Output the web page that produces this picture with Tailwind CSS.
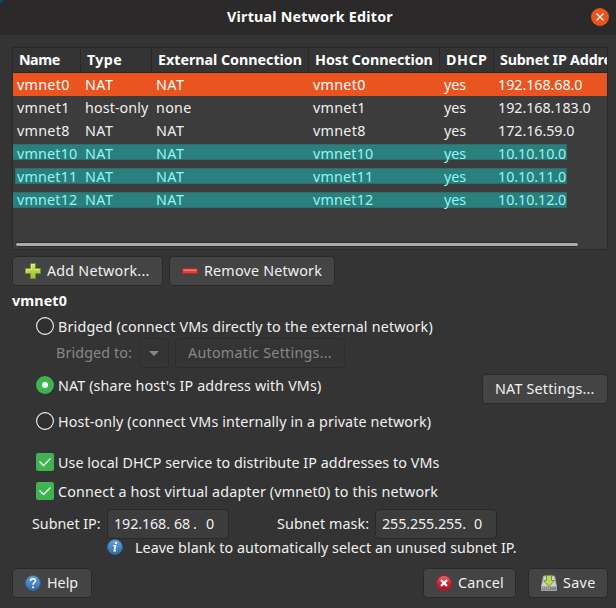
<!DOCTYPE html>
<html lang="en">
<head>
<meta charset="utf-8">
<title>Virtual Network Editor</title>
<script src="https://cdn.jsdelivr.net/npm/@tailwindcss/browser@4"></script>
</head>
<body class="bg-[#0b4a66]">
<main class="flex h-[608px] w-[616px] flex-col overflow-hidden rounded-tl-[6px] bg-[#343434] font-['Noto_Sans',sans-serif] text-[14.3px] leading-[20px] text-[#f0f0f0]">

  <!-- Title bar -->
  <header class="relative flex h-[35px] shrink-0 items-center justify-center bg-[#2b2929] pb-[2px] pl-[4px] text-white">
    <h1 class="font-bold tracking-[0.2px]">Virtual Network Editor</h1>
    <svg class="absolute top-[8px] right-[7px] size-[18px]" viewBox="0 0 18 18"><circle cx="9" cy="9" r="9" fill="#e95420"/><path d="M5.500 5.500l7 7M12.500 5.500l-7 7" stroke="#fff" stroke-width="1.200"/></svg>
  </header>

  <!-- Network table -->
  <section class="mt-[12px] ml-[12px] flex h-[203px] w-[596px] shrink-0 flex-col overflow-hidden border border-[#292929] bg-[#3c3c3c] whitespace-nowrap">
    <div class="grid h-[25px] shrink-0 grid-cols-[68px_71px_157px_131px_54px_113px] border-b border-[#272727] bg-[#343434] font-bold leading-[24px] text-white">
      <div class="border-r border-[#2a2a2a] pl-[6px] tracking-[-0.5px]">Name</div>
      <div class="border-r border-[#2a2a2a] pl-[6px] tracking-[0.35px]">Type</div>
      <div class="border-r border-[#2a2a2a] pl-[6px] tracking-[-0.03px]">External Connection</div>
      <div class="border-r border-[#2a2a2a] pl-[6px] tracking-[-0.03px]">Host Connection</div>
      <div class="border-r border-[#2a2a2a] pl-[6px] tracking-[0.5px]">DHCP</div>
      <div class="overflow-hidden pl-[6px] tracking-[-0.2px]">Subnet IP Address</div>
    </div>
    <div class="grid h-[23px] shrink-0 grid-cols-[68px_71px_157px_131px_54px_113px] bg-[#e95420] pl-[4px] leading-[23px] text-white">
      <div class="tracking-[0.3px]">vmnet0</div><div class="tracking-[0.5px]">NAT</div><div class="tracking-[0.5px]">NAT</div><div class="tracking-[0.3px]">vmnet0</div><div>yes</div><div class="tracking-[-0.05px]">192.168.68.0</div>
    </div>
    <div class="grid h-[23px] shrink-0 grid-cols-[68px_71px_157px_131px_54px_113px] pl-[4px] leading-[23px]">
      <div class="tracking-[0.3px]">vmnet1</div><div class="tracking-[0.1px]">host-only</div><div class="tracking-[0.3px]">none</div><div class="tracking-[0.3px]">vmnet1</div><div>yes</div><div class="tracking-[-0.05px]">192.168.183.0</div>
    </div>
    <div class="grid h-[23px] shrink-0 grid-cols-[68px_71px_157px_131px_54px_113px] pl-[4px] leading-[23px]">
      <div class="tracking-[0.3px]">vmnet8</div><div class="tracking-[0.5px]">NAT</div><div class="tracking-[0.5px]">NAT</div><div class="tracking-[0.3px]">vmnet8</div><div>yes</div><div class="tracking-[-0.05px]">172.16.59.0</div>
    </div>
    <div class="relative isolate grid h-[23px] shrink-0 grid-cols-[68px_71px_157px_131px_54px_113px] pl-[4px] leading-[23px] text-[#93f6f2]">
      <span class="absolute top-[2px] left-0 -z-10 h-[16px] w-[554px] border-y border-r border-[#2e6e6b] bg-[#29807e]"></span>
      <div class="tracking-[0.2px]">vmnet10</div><div class="tracking-[0.5px]">NAT</div><div class="tracking-[0.5px]">NAT</div><div class="tracking-[0.2px]">vmnet10</div><div>yes</div><div class="tracking-[-0.05px]">10.10.10.0</div>
    </div>
    <div class="relative isolate grid h-[23px] shrink-0 grid-cols-[68px_71px_157px_131px_54px_113px] pl-[4px] leading-[23px] text-[#93f6f2]">
      <span class="absolute top-[3px] left-[2px] -z-10 h-[16px] w-[552px] border border-[#2e6e6b] bg-[#29807e]"></span>
      <div class="tracking-[0.2px]">vmnet11</div><div class="tracking-[0.5px]">NAT</div><div class="tracking-[0.5px]">NAT</div><div class="tracking-[0.2px]">vmnet11</div><div>yes</div><div class="tracking-[-0.05px]">10.10.11.0</div>
    </div>
    <div class="relative isolate grid h-[23px] shrink-0 grid-cols-[68px_71px_157px_131px_54px_113px] pl-[4px] leading-[23px] text-[#93f6f2]">
      <span class="absolute top-[4px] left-0 -z-10 h-[16px] w-[554px] border-y border-r border-[#2e6e6b] bg-[#29807e]"></span>
      <div class="tracking-[0.2px]">vmnet12</div><div class="tracking-[0.5px]">NAT</div><div class="tracking-[0.5px]">NAT</div><div class="tracking-[0.2px]">vmnet12</div><div>yes</div><div class="tracking-[-0.05px]">10.10.12.0</div>
    </div>
    <div class="mt-auto mb-[2px] ml-[2px] h-[5px] w-[564px] shrink-0 rounded-[3px] border border-[#2c2c2c] bg-[#aaaaaa]"></div>
  </section>

  <!-- Table actions -->
  <div class="mt-[6px] ml-[12px] flex h-[30px] shrink-0 gap-[6px]">
    <button class="flex h-[30px] w-[151px] items-center rounded-[4px] border border-[#2a2a2a] bg-[#444444] pl-[12px] whitespace-nowrap">
      <svg class="mr-[6px] size-[16px] shrink-0" viewBox="0 0 16 16"><defs><linearGradient id="gp" x1="0" y1="0" x2="0" y2="1"><stop offset="0" stop-color="#cfe86a"/><stop offset="1" stop-color="#9fbf2a"/></linearGradient></defs><path d="M5.500.5h5v5h5v5h-5v5h-5v-5h-5v-5h5z" fill="url(#gp)" stroke="#6f9130"/><path d="M6.500 6V1.500h3M1.500 9.500v-3h5M9.500 6.500h5" fill="none" stroke="#e3f29a" stroke-opacity=".8"/></svg>
      <span class="tracking-[0.22px]">Add Network...</span>
    </button>
    <button class="flex h-[30px] w-[166px] items-center rounded-[4px] border border-[#2a2a2a] bg-[#444444] pl-[12px] whitespace-nowrap">
      <svg class="mr-[6px] size-[16px] shrink-0" viewBox="0 0 16 16"><path d="M.5 5.500h15v5H.5z" fill="#d84040" stroke="#b02a2a"/><path d="M1.500 6.500h13v1.500h-13z" fill="#ec7b78"/></svg>
      <span class="tracking-[0.2px]">Remove Network</span>
    </button>
  </div>

  <h2 class="mt-[5px] ml-[12px] h-[20px] shrink-0 font-bold tracking-[0.1px] text-white">vmnet0</h2>

  <!-- Connection mode -->
  <label class="mt-[5px] ml-[36px] flex h-[20px] shrink-0 items-center gap-[4px] whitespace-nowrap">
    <svg class="size-[18px] shrink-0" viewBox="0 0 18 18"><circle cx="9" cy="9" r="8.400" fill="#303030" stroke="#f2f2f2" stroke-width="1.100"/></svg>
    <span class="pt-[2px] tracking-[0.18px]">Bridged (connect VMs directly to the external network)</span>
  </label>
  <div class="mt-[2px] ml-[56px] flex h-[30px] shrink-0 items-center whitespace-nowrap text-[#878787]">
    <span class="w-[83px] tracking-[0.12px]">Bridged to:</span>
    <span class="flex h-[30px] w-[30px] items-center justify-center rounded-[4px] border border-[#2d2d2d]"><svg class="h-[5px] w-[10px]" viewBox="0 0 10 5"><path d="M0 0h10L5 5z" fill="#878787"/></svg></span>
    <span class="ml-[6px] flex h-[30px] w-[170px] items-center rounded-[4px] border border-[#2d2d2d] pl-[12px] tracking-[0.26px]">Automatic Settings...</span>
  </div>
  <div class="mt-[6px] mr-[8px] ml-[36px] flex h-[30px] shrink-0 items-start justify-between whitespace-nowrap">
    <label class="mt-[1px] flex h-[20px] items-center gap-[4px]">
      <svg class="size-[18px] shrink-0" viewBox="0 0 18 18"><circle cx="9" cy="9" r="9" fill="#3eb34f"/><circle cx="9" cy="9" r="3" fill="#fff"/></svg>
      <span class="pt-[2px] tracking-[0.13px]">NAT (share host's IP address with VMs)</span>
    </label>
    <button class="flex h-[30px] w-[126px] items-center rounded-[4px] border border-[#2a2a2a] bg-[#444444] pl-[12px] tracking-[0.2px]">NAT Settings...</button>
  </div>
  <label class="mt-[7px] ml-[36px] flex h-[20px] shrink-0 items-center gap-[4px] whitespace-nowrap">
    <svg class="size-[18px] shrink-0" viewBox="0 0 18 18"><circle cx="9" cy="9" r="8.400" fill="#303030" stroke="#f2f2f2" stroke-width="1.100"/></svg>
    <span class="pt-[2px] tracking-[0.12px]">Host-only (connect VMs internally in a private network)</span>
  </label>

  <!-- Options -->
  <label class="mt-[21px] ml-[36px] flex h-[20px] shrink-0 items-center gap-[4px] whitespace-nowrap">
    <svg class="size-[18px] shrink-0" viewBox="0 0 18 18"><rect width="18" height="18" rx="2" fill="#3eb34f"/><path d="M3.500 8.500l4 4L14.500 5.500" fill="none" stroke="#fff" stroke-width="1.300"/></svg>
    <span class="pt-[2px] tracking-[0.07px]">Use local DHCP service to distribute IP addresses to VMs</span>
  </label>
  <label class="mt-[9px] ml-[36px] flex h-[20px] shrink-0 items-center gap-[4px] whitespace-nowrap">
    <svg class="size-[18px] shrink-0" viewBox="0 0 18 18"><rect width="18" height="18" rx="2" fill="#3eb34f"/><path d="M3.500 8.500l4 4L14.500 5.500" fill="none" stroke="#fff" stroke-width="1.300"/></svg>
    <span class="pt-[2px] tracking-[0.16px]">Connect a host virtual adapter (vmnet0) to this network</span>
  </label>

  <!-- Subnet -->
  <div class="mt-[8px] ml-[32px] flex h-[30px] shrink-0 items-center whitespace-nowrap">
    <span class="w-[75px]">Subnet IP:</span>
    <span class="flex h-[30px] w-[122px] items-center rounded-[4px] border border-[#292929] bg-[#3c3c3c] pl-[6px] tracking-[-0.1px]"><span class="w-[60px]">192.168.</span><span class="w-[19px]">68</span><span class="w-[13px]">.</span><span>0</span></span>
    <span class="ml-[48px] w-[98px] tracking-[0.1px]">Subnet mask:</span>
    <span class="flex h-[30px] w-[122px] items-center rounded-[4px] border border-[#292929] bg-[#3c3c3c] pl-[6px] tracking-[-0.1px]"><span class="w-[92px]">255.255.255.</span><span>0</span></span>
  </div>
  <div class="ml-[107px] flex h-[16px] shrink-0 items-center gap-[12px] whitespace-nowrap">
    <svg class="size-[16px] shrink-0" viewBox="0 0 16 16"><defs><linearGradient id="gi" x1="0" y1="0" x2="0" y2="1"><stop offset="0" stop-color="#69a3dc"/><stop offset="1" stop-color="#2b6cab"/></linearGradient></defs><circle cx="8" cy="8" r="7.500" fill="url(#gi)" stroke="#2c659c"/><path d="M6.300 6.800h2.200L7.300 11.700h1.700" fill="none" stroke="#fff" stroke-width="1.600"/><circle cx="9" cy="4" r="1.300" fill="#fff"/></svg>
    <span class="pt-[2px] tracking-[0.07px]">Leave blank to automatically select an unused subnet IP.</span>
  </div>

  <!-- Dialog buttons -->
  <footer class="mt-[13px] mr-[8px] ml-[12px] flex h-[30px] shrink-0 whitespace-nowrap">
    <button class="flex h-[30px] w-[80px] items-center rounded-[4px] border border-[#2a2a2a] bg-[#444444] pl-[12px]">
      <svg class="mr-[6px] size-[16px] shrink-0" viewBox="0 0 16 16"><circle cx="8" cy="8" r="7.500" fill="url(#gi)" stroke="#2c659c"/><path d="M5.500 6c0-3 5-3 5-.3C10.500 7.500 8 7.600 8 9.800" fill="none" stroke="#fff" stroke-width="1.500"/><circle cx="8" cy="12.200" r="1" fill="#fff"/></svg>
      <span>Help</span>
    </button>
    <button class="ml-auto flex h-[30px] w-[93px] items-center rounded-[4px] border border-[#2a2a2a] bg-[#444444] pl-[12px]">
      <svg class="mr-[6px] size-[16px] shrink-0" viewBox="0 0 16 16"><defs><linearGradient id="gc" x1="0" y1="0" x2="0" y2="1"><stop offset="0" stop-color="#e8666a"/><stop offset=".6" stop-color="#c81e2c"/><stop offset="1" stop-color="#b01220"/></linearGradient></defs><circle cx="8" cy="8" r="7.500" fill="url(#gc)" stroke="#a8202a"/><path d="M5 5l6 6M11 5l-6 6" stroke="#fff" stroke-width="2.200"/></svg>
      <span class="tracking-[0.25px]">Cancel</span>
    </button>
    <button class="ml-[12px] flex h-[30px] w-[80px] items-center rounded-[4px] border border-[#2a2a2a] bg-[#444444] pl-[12px]">
      <svg class="mr-[6px] size-[16px] shrink-0" viewBox="0 0 16 16"><path d="M2.500 1h11L15.500 11v4.500H.5V11z" fill="#d2d2d2" stroke="#a3a3a3"/><path d="M1 11.500h14v3.500H1z" fill="#888"/><path d="M2 13.200h8" stroke="#ccc" stroke-dasharray="1 1"/><path d="M5.500.5h5v5h3L8 11.500 2.500 5.500h3z" fill="#b9da62" stroke="#6f9a2c"/></svg>
      <span class="tracking-[0.35px]">Save</span>
    </button>
  </footer>
</main>
</body>
</html>
